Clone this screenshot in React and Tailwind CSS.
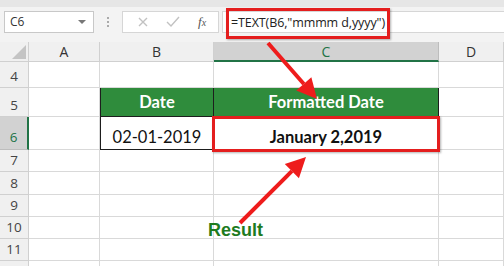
// Excel sheet screenshot: TEXT() date formatting example
const cell = "border-r border-b border-[#d9d9d9]";
const rowHead = "flex items-end justify-center pb-[4px] bg-[#f0f0f0] border-r border-b border-[#d0d0d0] text-[13.5px] leading-none text-[#444]";

function Arrow({ x1, y1, x2, y2 }) {
  // shaft ends a bit before the tip so the head covers it
  const a = Math.atan2(y2 - y1, x2 - x1);
  const L = 20, W = 10;
  const bx = x2 - L * Math.cos(a), by = y2 - L * Math.sin(a);
  const px = -Math.sin(a) * W, py = Math.cos(a) * W;
  return (
    <g>
      <line x1={x1} y1={y1} x2={bx} y2={by} stroke="#ee1c1c" strokeWidth="4" />
      <polygon points={`${x2},${y2} ${bx + px},${by + py} ${bx - px},${by - py}`} fill="#ee1c1c" />
    </g>
  );
}

export default function App() {
  const rows = [
    ["4", 26],
    ["5", 29],
    ["6", 33],
    ["7", 22],
    ["8", 23],
    ["9", 22],
    ["10", 22],
    ["11", 22],
    ["", 22],
  ];

  return (
    <div className="relative w-[504px] h-[266px] overflow-hidden bg-white font-['Open_Sans',sans-serif]">
      {/* Formula bar */}
      <div className="h-[42px] bg-[#f3f3f3] border-t-[7px] border-[#e6e6e6] flex items-start pt-[4px]">
        <div className="ml-[4px] w-[90px] h-[22px] bg-white border border-[#c8c8c8] flex items-center justify-between px-[5px]">
          <span className="text-[12px] text-[#333]">C6</span>
          <span className="w-0 h-0 border-l-[4px] border-r-[4px] border-t-[4px] border-l-transparent border-r-transparent border-t-[#777] mr-[2px]"></span>
        </div>
        <div className="w-[28px] h-[22px] flex flex-col items-center justify-center gap-[2px]">
          <span className="w-[2px] h-[2px] bg-[#aaa]"></span>
          <span className="w-[2px] h-[2px] bg-[#aaa]"></span>
          <span className="w-[2px] h-[2px] bg-[#aaa]"></span>
        </div>
        <div className="w-[97px] h-[22px] bg-white border border-[#d6d6d6] flex items-center pl-[12px]">
          <svg width="12" height="12" viewBox="0 0 12 12" className="ml-[2px]">
            <path d="M2 2 L10 10 M10 2 L2 10" stroke="#c2c2c2" strokeWidth="1.4" />
          </svg>
          <svg width="14" height="12" viewBox="0 0 14 12" className="ml-[17px]">
            <path d="M1 6 L5 10 L13 1" stroke="#c2c2c2" strokeWidth="1.4" fill="none" />
          </svg>
          <span className="ml-[18px] text-[13px] italic text-[#555] font-['Liberation_Serif',serif]">f<span className="text-[10px]">x</span></span>
        </div>
        <div className="ml-[3px] flex-1 h-[22px] bg-white border-y border-l border-[#d6d6d6] relative">
          <div className="absolute left-[3px] top-[-4px] w-[164px] h-[31px] border-[3.5px] border-[#e41e1e] shadow-[1px_1px_2px_rgba(0,0,0,0.3)] flex items-center pl-[2px]">
            <span className="text-[12.5px] text-[#222] whitespace-nowrap tracking-[-0.1px]">=TEXT(B6,"mmmm d,yyyy")</span>
          </div>
        </div>
      </div>

      {/* Sheet grid */}
      <div className="grid grid-cols-[29px_71px_114px_225px_1fr]">
        {/* corner + column headers */}
        <div className="h-[20px] bg-[#f0f0f0] border-r border-b border-[#d0d0d0] flex items-end justify-end p-[2px]">
          <svg width="14" height="14" viewBox="0 0 14 14"><polygon points="14,0 14,14 0,14" fill="#c4c4c4" /></svg>
        </div>
        {["A", "B", "C", "D"].map((c) => (
          <div
            key={c}
            className={
              c === "C"
                ? "h-[20px] bg-[#d2d2d2] border-r border-[#bdbdbd] border-b-2 border-b-[#217346] flex items-center justify-center text-[14px] text-[#217346]"
                : "h-[20px] bg-[#f0f0f0] border-r border-b border-[#d0d0d0] flex items-center justify-center text-[14px] text-[#333]"
            }
          >
            {c}
          </div>
        ))}

        {rows.map(([n, h], i) => (
          <Row key={i} n={n} h={h} />
        ))}
      </div>

      {/* Result label */}
      <div className="absolute left-[208px] top-[221px] text-[18px] leading-none font-bold text-[#1e7b1e] font-['Liberation_Sans',sans-serif]">
        Result
      </div>

      {/* Arrows */}
      <svg className="absolute inset-0 pointer-events-none" width="504" height="266">
        <Arrow x1={268} y1={43} x2={317} y2={99} />
        <Arrow x1={240} y1={223} x2={306} y2={157} />
      </svg>
    </div>
  );
}

function Row({ n, h }) {
  const style = { height: h };
  const lato = "font-['Lato',sans-serif] text-[16.5px] leading-none";

  if (n === "5") {
    return (
      <>
        <div className={rowHead} style={style}>{n}</div>
        <div className={cell} style={style}></div>
        <div className={`${lato} bg-[#2f8c3c] border-l border-b border-r border-[#1d1d1d] text-white font-bold flex items-end justify-center pb-[6px]`} style={style}>Date</div>
        <div className={`${lato} bg-[#2f8c3c] border-b border-r border-[#1d1d1d] text-white font-bold flex items-end justify-center pb-[6px]`} style={style}>Formatted Date</div>
        <div className={cell} style={style}></div>
      </>
    );
  }

  if (n === "6") {
    return (
      <>
        <div className="flex items-end justify-center pb-[5px] bg-[#d2d2d2] border-r-2 border-r-[#217346] border-b border-[#bdbdbd] text-[13.5px] leading-none text-[#217346]" style={style}>{n}</div>
        <div className={cell} style={style}></div>
        <div className={`${lato} border-l border-b border-r border-[#1d1d1d] text-[#111] flex items-end justify-center pb-[4px]`} style={style}>02-01-2019</div>
        <div className={`${lato} relative border-b border-r border-[#1d1d1d] text-[#111] font-bold flex items-end justify-center pb-[4px]`} style={style}>
          <div className="absolute -left-[2px] -top-[1px] -right-[2px] -bottom-[3px] border-[3.5px] border-[#e41e1e] shadow-[1px_1px_2px_rgba(0,0,0,0.3)]"></div>
          January 2,2019
        </div>
        <div className={cell} style={style}></div>
      </>
    );
  }

  return (
    <>
      <div className={rowHead} style={style}>{n}</div>
      <div className={cell} style={style}></div>
      <div className={cell} style={style}></div>
      <div className={cell} style={style}></div>
      <div className={cell} style={style}></div>
    </>
  );
}
